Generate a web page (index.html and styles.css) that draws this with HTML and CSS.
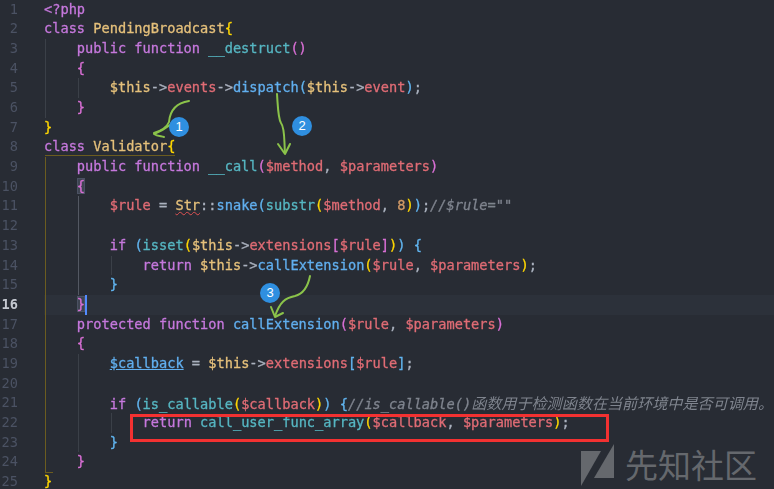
FILE: index.html
```html
<!DOCTYPE html>
<html lang="zh">
<head>
<meta charset="utf-8">
<title>PHP</title>
<link rel="stylesheet" href="styles.css">
</head>
<body>
<main class="editor">
<div class="line"><span class="num">1</span><code class="code"><span class="k">&lt;?php</span></code></div>
<div class="line"><span class="num">2</span><code class="code"><span class="k">class</span> <span class="c">PendingBroadcast</span><span class="by">{</span></code></div>
<div class="line"><span class="num">3</span><code class="code"><span class="g">    </span><span class="k">public function</span> <span class="t">__destruct</span><span class="bp">()</span></code></div>
<div class="line"><span class="num">4</span><code class="code"><span class="g">    </span><span class="bp">{</span></code></div>
<div class="line"><span class="num">5</span><code class="code"><span class="g">    </span><span class="g">    </span><span class="c">$this</span><span class="o">-&gt;</span><span class="v">events</span><span class="o">-&gt;</span><span class="f">dispatch</span><span class="bb">(</span><span class="c">$this</span><span class="o">-&gt;</span><span class="v">event</span><span class="bb">)</span><span class="o">;</span></code></div>
<div class="line"><span class="num">6</span><code class="code"><span class="g">    </span><span class="bp">}</span></code></div>
<div class="line"><span class="num">7</span><code class="code"><span class="by">}</span></code></div>
<div class="line"><span class="num">8</span><code class="code"><span class="k">class</span> <span class="c">Validator</span><span class="by">{</span></code></div>
<div class="line"><span class="num">9</span><code class="code"><span class="gy">    </span><span class="k">public function</span> <span class="t">__call</span><span class="bp">(</span><span class="v">$method</span><span class="o">, </span><span class="v">$parameters</span><span class="bp">)</span></code></div>
<div class="line"><span class="num">10</span><code class="code"><span class="gy">    </span><span class="bp match">{</span></code></div>
<div class="line"><span class="num">11</span><code class="code"><span class="gy">    </span><span class="ga">    </span><span class="v">$rule</span><span class="o"> = </span><span class="c err">Str</span><span class="o">::</span><span class="f">snake</span><span class="bb">(</span><span class="t">substr</span><span class="by">(</span><span class="v">$method</span><span class="o">, </span><span class="n">8</span><span class="by">)</span><span class="bb">)</span><span class="o">;</span><span class="m">//$rule=""</span></code></div>
<div class="line"><span class="num">12</span><code class="code"><span class="gy">    </span><span class="ga"> </span></code></div>
<div class="line"><span class="num">13</span><code class="code"><span class="gy">    </span><span class="ga">    </span><span class="k">if</span> <span class="bb">(</span><span class="t">isset</span><span class="by">(</span><span class="c">$this</span><span class="o">-&gt;</span><span class="v">extensions</span><span class="bp">[</span><span class="v">$rule</span><span class="bp">]</span><span class="by">)</span><span class="bb">)</span> <span class="bb">{</span></code></div>
<div class="line"><span class="num">14</span><code class="code"><span class="gy">    </span><span class="ga">    </span><span class="g">    </span><span class="k">return</span> <span class="c">$this</span><span class="o">-&gt;</span><span class="f">callExtension</span><span class="by">(</span><span class="v">$rule</span><span class="o">, </span><span class="v">$parameters</span><span class="by">)</span><span class="o">;</span></code></div>
<div class="line"><span class="num">15</span><code class="code"><span class="gy">    </span><span class="ga">    </span><span class="bb">}</span></code></div>
<div class="line current"><span class="num">16</span><code class="code"><span class="gy">    </span><span class="bp match">}</span><span class="cursor"></span></code></div>
<div class="line"><span class="num">17</span><code class="code"><span class="gy">    </span><span class="k">protected function</span> <span class="f">callExtension</span><span class="bp">(</span><span class="v">$rule</span><span class="o">, </span><span class="v">$parameters</span><span class="bp">)</span></code></div>
<div class="line"><span class="num">18</span><code class="code"><span class="gy">    </span><span class="bp">{</span></code></div>
<div class="line"><span class="num">19</span><code class="code"><span class="gy">    </span><span class="g">    </span><span class="cb">$callback</span><span class="o"> = </span><span class="c">$this</span><span class="o">-&gt;</span><span class="v">extensions</span><span class="bb">[</span><span class="v">$rule</span><span class="bb">]</span><span class="o">;</span></code></div>
<div class="line"><span class="num">20</span><code class="code"><span class="gy">    </span><span class="g"> </span></code></div>
<div class="line"><span class="num">21</span><code class="code"><span class="gy">    </span><span class="g">    </span><span class="k">if</span> <span class="bb">(</span><span class="t">is_callable</span><span class="by">(</span><span class="v">$callback</span><span class="by">)</span><span class="bb">)</span> <span class="bb">{</span><span class="m">//is_callable()<span class="zh">函数用于检测函数在当前环境中是否可调用。</span></span></code></div>
<div class="line"><span class="num">22</span><code class="code"><span class="gy">    </span><span class="g">    </span><span class="g">    </span><span class="k">return</span> <span class="t">call_user_func_array</span><span class="by">(</span><span class="v">$callback</span><span class="o">, </span><span class="v">$parameters</span><span class="by">)</span><span class="o">;</span></code></div>
<div class="line"><span class="num">23</span><code class="code"><span class="gy">    </span><span class="g">    </span><span class="bb">}</span></code></div>
<div class="line"><span class="num">24</span><code class="code"><span class="gy">    </span><span class="bp">}</span></code></div>
<div class="line"><span class="num">25</span><code class="code"><span class="by">}</span></code></div>

<span class="fold-top"></span>
<span class="fold-bottom"></span>
<span class="redbox"></span>

<svg class="marks" width="774" height="489" viewBox="0 0 774 489" aria-hidden="true">
  <g class="arrow">
    <path d="M189 101C176 103 170 110 169 122C167 127 160 131 154 133"/>
    <path d="M170 125C165 129 159 132 154 134C157 136 160 136 164 137"/>
    <path d="M277 94C278 108 278 118 281 123C285 128 284 140 285 153"/>
    <path d="M278 144L285 154L290 144"/>
    <path d="M310 276C308 286 303 294 295 296C285 298 280 302 275 316"/>
    <path d="M271 307L275 317L283 313"/>
  </g>
  <circle class="dot" cx="179" cy="127" r="10"/>
  <circle class="dot" cx="302" cy="126" r="10"/>
  <circle class="dot" cx="270" cy="293" r="10"/>
  <polygon class="wm" points="581,451 601,451 581,486"/>
  <polygon class="wm" points="594,478 614,444 614,478"/>
</svg>
<span class="badge b1">1</span>
<span class="badge b2">2</span>
<span class="badge b3">3</span>
<span class="watermark">先知社区</span>
</main>
</body>
</html>
```

FILE: styles.css
```css
html, body { margin: 0; padding: 0; }
body { width: 774px; height: 489px; overflow: hidden; background: #282c34; }
.editor {
  position: relative;
  width: 774px;
  height: 489px;
  overflow: hidden;
  font-family: "DejaVu Sans Mono", monospace;
  font-size: 13.65px;
  color: #abb2bf;
  box-sizing: border-box;
}
.line {
  display: flex;
  height: 19.7px;
  line-height: 19.7px;
  white-space: pre;
  -webkit-text-stroke: 0.3px;
  filter: blur(0.3px);
}
.line:first-child { margin-top: -0.4px; }
.num { flex: 0 0 18px; text-align: right; color: #4b5263; margin-right: 26px; -webkit-text-stroke: 0; }
.code { font: inherit; white-space: pre; flex: 1; }
.current { background: #2c313a; }
.current .num { color: #c5c9d1; font-weight: 700; background: #282c34; margin-right: 0; padding-right: 26px; flex-basis: 44px; box-sizing: border-box; }
.g, .ga, .gy {
  display: inline-block;
  width: 32.86px;
  height: 19.7px;
  vertical-align: top;
  background: linear-gradient(#3b4048, #3b4048) 1px 0 / 1px 100% no-repeat;
}
.ga { background-image: linear-gradient(#535862, #535862); }
.gy { background-image: linear-gradient(#6b5c1f, #6b5c1f); }
.k { color: #c678dd; }
.c { color: #e5c07b; }
.t { color: #56b6c2; }
.f { color: #61afef; }
.v { color: #e06c75; }
.o { color: #abb2bf; }
.n { color: #d19a66; }
.cb { color: #61afef; text-decoration: underline; }
.by { color: #ffd700; }
.bp { color: #da70d6; }
.bb { color: #61b5f0; }
.m { color: #7f848e; font-style: italic; }
.zh { font-family: "Noto Sans CJK SC", sans-serif; font-size: 15.1px; -webkit-text-stroke: 0; }
.err { text-decoration: underline wavy #e05252 1px; }
.match { background: #3e4451; box-shadow: 0 0 0 1px #4b5263 inset; }
.cursor { display: inline-block; width: 2px; height: 19.7px; background: #528bff; vertical-align: top; }

.fold-top { position: absolute; left: 45px; top: 155px; width: 130px; height: 1px; background: #6b5c1f; }
.fold-bottom { position: absolute; left: 45px; top: 472px; width: 8px; height: 1px; background: #6b5c1f; }
.redbox { position: absolute; left: 130px; top: 414px; width: 473px; height: 22px; border: 3px solid #f33131; }

.marks { position: absolute; left: 0; top: 0; pointer-events: none; }
.arrow path { fill: none; stroke: #8bc34a; stroke-width: 2; stroke-linecap: round; stroke-linejoin: round; }
.dot { fill: #2f8fe0; }
.wm { fill: #65686d; }
.badge {
  position: absolute;
  width: 20px;
  height: 20px;
  line-height: 20px;
  text-align: center;
  color: #fff;
  font-family: "Liberation Sans", sans-serif;
  font-size: 13px;
}
.b1 { left: 169px; top: 117px; }
.b2 { left: 292px; top: 116px; }
.b3 { left: 260px; top: 283px; }
.watermark {
  position: absolute;
  left: 625px;
  top: 440px;
  font-family: "Noto Sans CJK SC", sans-serif;
  font-size: 33px;
  line-height: 48px;
  color: #65686d;
  white-space: nowrap;
}
```
